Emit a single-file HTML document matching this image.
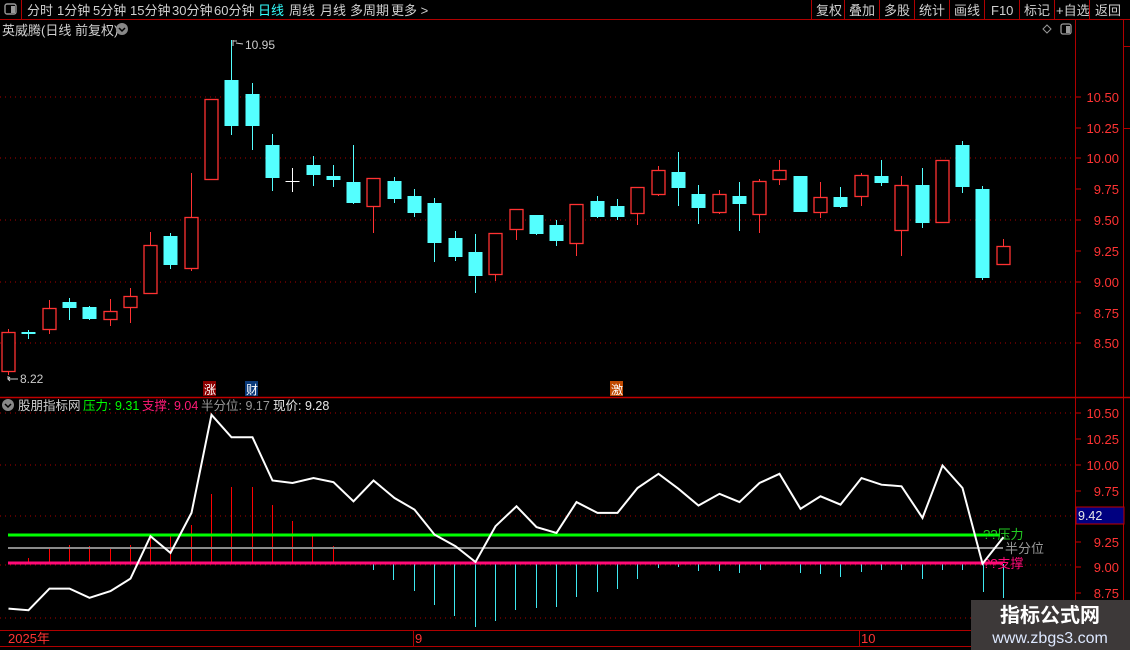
<!DOCTYPE html>
<html><head><meta charset="utf-8">
<style>
html,body{margin:0;padding:0;background:#000;width:1130px;height:650px;overflow:hidden;font-family:"Liberation Sans","Noto Sans CJK SC",sans-serif;}
svg{position:absolute;left:0;top:0}
</style></head><body>
<svg id="s" width="1130" height="650" xmlns="http://www.w3.org/2000/svg" font-family="Liberation Sans, Noto Sans CJK SC, sans-serif">
<rect width="1130" height="650" fill="#000"/>
<!-- top bar -->
<line x1="0" y1="19.5" x2="1130" y2="19.5" stroke="#b00000"/>
<line x1="21.5" y1="0" x2="21.5" y2="20" stroke="#b00000"/>
<rect x="5" y="4" width="11" height="10" rx="2" fill="none" stroke="#999" stroke-width="1.4"/>
<rect x="11" y="6" width="4" height="7" fill="#999"/>
<g font-size="13" fill="#d0d0d0">
<text x="27" y="15">分时</text><text x="57" y="15">1分钟</text><text x="93" y="15">5分钟</text><text x="130" y="15">15分钟</text><text x="172" y="15">30分钟</text><text x="214" y="15">60分钟</text><text x="258" y="15" fill="#3ff">日线</text><text x="289" y="15">周线</text><text x="320" y="15">月线</text><text x="350" y="15">多周期</text><text x="391" y="15">更多 &gt;</text>
<text x="816" y="15">复权</text><text x="849" y="15">叠加</text><text x="884" y="15">多股</text><text x="919" y="15">统计</text><text x="954" y="15">画线</text><text x="991" y="15">F10</text><text x="1024" y="15">标记</text><text x="1056" y="15">+自选</text><text x="1095" y="15">返回</text>
</g>
<g stroke="#b00000"><line x1="811.5" y1="0" x2="811.5" y2="20"/><line x1="844.5" y1="0" x2="844.5" y2="20"/><line x1="879.5" y1="0" x2="879.5" y2="20"/><line x1="914.5" y1="0" x2="914.5" y2="20"/><line x1="949.5" y1="0" x2="949.5" y2="20"/><line x1="984.5" y1="0" x2="984.5" y2="20"/><line x1="1019.5" y1="0" x2="1019.5" y2="20"/><line x1="1054.5" y1="0" x2="1054.5" y2="20"/><line x1="1089.5" y1="0" x2="1089.5" y2="20"/></g>
<text x="2" y="35" font-size="13" fill="#d0d0d0">英威腾(日线 前复权)</text>
<circle cx="122" cy="29" r="6" fill="#888"/><path d="M119 28 L122 31 L125 28" stroke="#000" stroke-width="1.5" fill="none"/>
<path d="M1047 25 L1051 29 L1047 33 L1043 29 Z" fill="none" stroke="#999"/>
<rect x="1061" y="24" width="10" height="10" rx="2" fill="none" stroke="#999" stroke-width="1.3"/><rect x="1066" y="26" width="4" height="7" fill="#999"/>
<!-- axis frame -->
<line x1="1075.5" y1="20" x2="1075.5" y2="650" stroke="#b00000"/>
<line x1="1123.5" y1="20" x2="1123.5" y2="650" stroke="#b00000"/>
<line x1="1123" y1="46.5" x2="1130" y2="46.5" stroke="#b00000"/>
<line x1="1123" y1="128.5" x2="1130" y2="128.5" stroke="#b00000"/>
<line x1="0" y1="397.5" x2="1130" y2="397.5" stroke="#c00000" stroke-width="1.5"/>
<line x1="0" y1="630.5" x2="1075" y2="630.5" stroke="#b00000"/>
<line x1="0" y1="646.5" x2="1075" y2="646.5" stroke="#b00000"/>
<line x1="413.5" y1="630" x2="413.5" y2="646" stroke="#b00000"/>
<line x1="859.5" y1="630" x2="859.5" y2="646" stroke="#b00000"/>
<text x="8" y="643" font-size="13" fill="#f33">2025年</text>
<text x="415" y="643" font-size="13" fill="#f33">9</text>
<text x="861" y="643" font-size="13" fill="#f33">10</text>
<g id="dyn"></g>
<!-- markers -->
<rect x="203" y="381" width="13" height="15" fill="#8b0000"/><text x="204" y="394" font-size="12" fill="#fff">涨</text>
<rect x="245" y="381" width="13" height="15" fill="#0a3a7a"/><text x="246" y="394" font-size="12" fill="#fff">财</text>
<rect x="610" y="381" width="13" height="15" fill="#c04a00"/><text x="611" y="394" font-size="12" fill="#fff">激</text>
<text x="245" y="49" font-size="12" fill="#ccc">10.95</text>
<path d="M233 40 L233 46 M233 41 L237 41 M236 43 L243 44" stroke="#ccc" fill="none"/>
<text x="20" y="383" font-size="12" fill="#ccc">8.22</text>
<path d="M8 376 L8 379 L18 379 M10 377 L8 379 L10 381" stroke="#ccc" fill="none"/>
<!-- indicator header -->
<circle cx="8" cy="405" r="6" fill="#888"/><path d="M5 404 L8 407 L11 404" stroke="#000" stroke-width="1.5" fill="none"/>
<g font-size="12.5">
<text x="18" y="410" fill="#d0d0d0">股朋指标网</text>
<text x="83" y="410" fill="#0f0">压力: 9.31</text>
<text x="142" y="410" fill="#ff1a75">支撑: 9.04</text>
<text x="201" y="410" fill="#999">半分位: 9.17</text>
<text x="273" y="410" fill="#e8e8e8">现价: 9.28</text>
</g>
<rect x="1076" y="507" width="48" height="17" fill="#000080" stroke="#c00000"/>
<text x="1078" y="520" font-size="12.5" fill="#e8e8e8">9.42</text>
<!-- watermark -->
<rect x="971" y="600" width="159" height="50" fill="#3d3939"/>
<text x="1050" y="622" font-size="20" font-weight="bold" fill="#fff" text-anchor="middle">指标公式网</text>
<text x="1050" y="643" font-size="16" fill="#dde8ff" text-anchor="middle">www.zbgs3.com</text>
</svg>
<script>
var ns="http://www.w3.org/2000/svg",g=document.getElementById("dyn"),h="";
function ax(y,t){h+='<line x1="1076" y1="'+y+'" x2="1081" y2="'+y+'" stroke="#c00"/><text x="1119" y="'+(y+5)+'" font-size="13" fill="#f33" text-anchor="end">'+t+'</text>';}
// top grid
[97,158,220,282,343].forEach(function(y){h+='<line x1="0" y1="'+y+'" x2="1075" y2="'+y+'" stroke="#a00" stroke-dasharray="1,4"/>';});
[[97,"10.50"],[128,"10.25"],[158,"10.00"],[189,"9.75"],[220,"9.50"],[251,"9.25"],[282,"9.00"],[313,"8.75"],[343,"8.50"]].forEach(function(a){ax(a[0],a[1]);});
// bottom grid
[413,465,516,565,618].forEach(function(y){h+='<line x1="0" y1="'+y+'" x2="1075" y2="'+y+'" stroke="#a00" stroke-dasharray="1,4"/>';});
[[413,"10.50"],[439,"10.25"],[465,"10.00"],[491,"9.75"],[542,"9.25"],[567,"9.00"],[593,"8.75"]].forEach(function(a){ax(a[0],a[1]);});
// candles: type, bodyTop, bodyBot, wickTop, wickBot
var C=[["r",332,372,329,375],["c",332,334,330,339],["r",308,330,300,334],["c",302,308,298,320],["c",307,319,306,320],["r",311,320,299,326],["r",296,308,288,323],["r",245,294,232,294],["c",236,265,233,269],["r",217,269,173,271],["r",99,180,99,180],["c",80,126,40,135],["c",94,126,83,150],["c",145,178,134,191],["w",181,181,168,192],["c",165,175,156,186],["c",176,180,165,187],["c",182,203,145,204],["r",178,207,178,233],["c",181,199,177,203],["c",196,213,189,217],["c",203,243,198,262],["c",238,257,231,261],["c",252,276,234,293],["r",233,275,233,281],["r",209,230,209,240],["c",215,234,215,235],["c",225,241,220,246],["r",204,244,204,256],["c",201,217,196,218],["c",206,217,199,220],["r",187,214,187,225],["r",170,195,166,196],["c",172,188,152,206],["c",194,208,185,224],["r",194,213,190,214],["c",196,204,182,231],["r",181,215,179,233],["r",170,180,160,185],["c",176,212,176,212],["r",197,213,182,218],["c",197,207,187,208],["r",175,197,173,206],["c",176,183,160,186],["r",185,231,176,256],["c",185,223,168,228],["r",160,223,160,223],["c",145,187,141,193],["c",189,278,186,280],["r",246,265,239,265]];
var pts=[];
C.forEach(function(c,i){var x=Math.round(8+i*20.3)+0.5;
 var col=c[0]=="r"?"#ff3232":(c[0]=="c"?"#54ffff":"#fff");
 h+='<line x1="'+x+'" y1="'+c[3]+'" x2="'+x+'" y2="'+c[4]+'" stroke="'+col+'"/>';
 if(c[0]=="r")h+='<rect x="'+(x-6.5)+'" y="'+(c[1]+0.5)+'" width="13" height="'+(c[2]-c[1]-1)+'" fill="#000" stroke="'+col+'" stroke-width="1.3"/>';
 else if(c[0]=="c")h+='<rect x="'+(x-7)+'" y="'+c[1]+'" width="14" height="'+Math.max(c[2]-c[1],2)+'" fill="'+col+'"/>';
 else h+='<line x1="'+(x-7)+'" y1="181.5" x2="'+(x+7)+'" y2="181.5" stroke="#fff"/>';
 var close=c[0]=="c"?c[2]:c[1];
 pts.push([x,567-(282-close)*0.8317]);
});
// bars
var B=[[28,558],[49,549],[69,545],[89,546],[110,549],[130,545],[150,538],[170,536],[191,525],[211,494],[231,487],[252,487],[272,505],[292,521],[312,536],[333,546],[373,570],[393,580],[414,591],[434,605],[454,616],[475,627],[495,621],[515,610],[536,608],[556,607],[576,597],[597,592],[617,589],[637,579],[658,568],[678,567],[698,571],[719,571],[739,573],[760,570],[800,573],[820,574],[840,577],[861,572],[881,570],[901,570],[922,579],[942,570],[962,570],[983,592],[1003,598]];
B.forEach(function(b){var up=b[1]<563;h+='<line x1="'+(b[0]+0.5)+'" y1="'+(up?562:564)+'" x2="'+(b[0]+0.5)+'" y2="'+b[1]+'" stroke="'+(up?"#f00":"#3ee8f0")+'"/>';});
// level lines
h+='<line x1="8" y1="535" x2="1000" y2="535" stroke="#0f0" stroke-width="3"/>';
h+='<line x1="8" y1="548" x2="1003" y2="548" stroke="#8a8a8a" stroke-width="2"/>';
h+='<line x1="8" y1="563" x2="1003" y2="563" stroke="#ff0a78" stroke-width="3"/>';
h+='<text x="983" y="539" font-size="13" fill="#2c2">??压力</text><text x="1005" y="553" font-size="13" fill="#999">半分位</text><text x="983" y="568" font-size="13" fill="#ff0a78">??支撑</text>';
h+='<polyline points="'+pts.map(function(p){return p[0]+","+p[1].toFixed(1)}).join(" ")+'" fill="none" stroke="#fff" stroke-width="2"/>';
g.innerHTML=h;
</script>
</body></html>
